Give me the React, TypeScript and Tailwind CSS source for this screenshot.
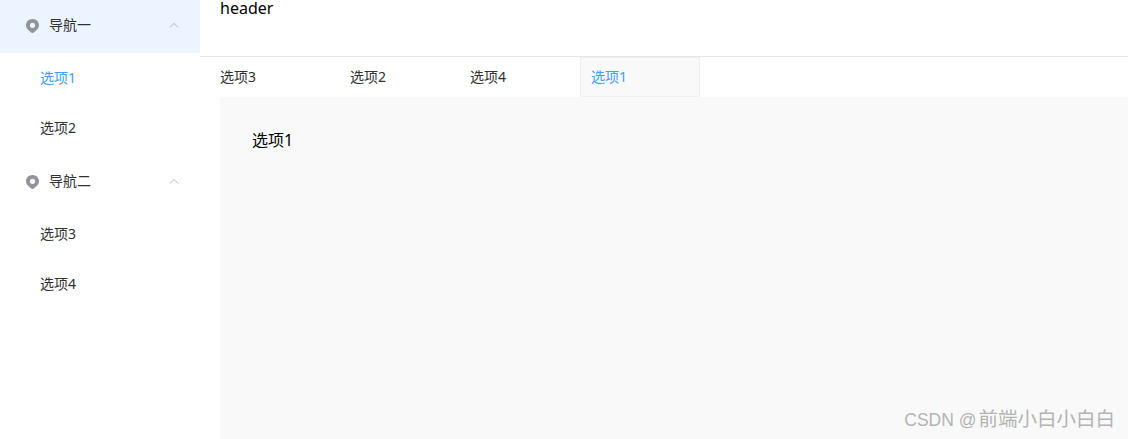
import React from 'react';

const PinIcon: React.FC = () => (
  <svg viewBox="0 0 13 14" className="w-[13px] h-[14px] shrink-0 ml-px mt-[2px]" fill="#909399">
    <path
      fillRule="evenodd"
      d="M6.500 0C2.900 0 0 2.800 0 6.300c0 2.600 1.900 5 5.600 7.400.5.400 1.300.400 1.800 0C11.100 11.300 13 8.900 13 6.300 13 2.800 10.100 0 6.500 0zm0 8.900a2.600 2.600 0 1 1 0-5.200 2.600 2.600 0 0 1 0 5.200z"
    />
  </svg>
);

const Chevron: React.FC = () => (
  <svg viewBox="0 0 12 8" className="w-[10px] h-[7px]" fill="none" stroke="#a3aebc" strokeWidth="1">
    <path d="M1 6.500 L6 1.500 L11 6.500" />
  </svg>
);

const NavGroup: React.FC<{ title: string; active?: boolean }> = ({ title, active }) => (
  <div className={`h-14 flex items-center pl-[25px] pr-[21px] text-sm text-[#303133] ${active ? 'bg-[#ecf5ff]' : ''}`}>
    <PinIcon />
    <span className="ml-[10px] flex-1">{title}</span>
    <Chevron />
  </div>
);

const NavItem: React.FC<{ label: string; active?: boolean }> = ({ label, active }) => (
  <div className={`h-[50px] flex items-center pl-10 text-sm ${active ? 'text-[#409eff]' : 'text-[#303133]'}`}>
    {label}
  </div>
);

export default function App() {
  return (
    <div className="relative flex w-[1128px] h-[439px] overflow-hidden bg-white font-['Noto_Sans','Noto_Sans_CJK_SC',sans-serif]">
      <aside className="w-[200px] shrink-0 -mt-[3px]">
        <NavGroup title="导航一" active />
        <NavItem label="选项1" active />
        <NavItem label="选项2" />
        <NavGroup title="导航二" />
        <NavItem label="选项3" />
        <NavItem label="选项4" />
      </aside>
      <main className="flex-1 flex flex-col min-w-0">
        <header className="h-[57px] shrink-0 border-b border-[#e6e6e6] pl-5 text-base leading-4 text-black">
          header
        </header>
        <div className="h-10 shrink-0 flex text-sm text-[#303133]">
          <div className="w-[130px] pl-5 flex items-center">选项3</div>
          <div className="w-[120px] pl-5 flex items-center">选项2</div>
          <div className="w-[130px] pl-5 flex items-center">选项4</div>
          <div className="w-[120px] pl-[10px] flex items-center bg-[#f9f9f9] border border-[#f0f0f0] text-[#409eff]">选项1</div>
        </div>
        <div className="flex-1 ml-5 bg-[#f9f9f9] pl-8 pt-[33px] text-base leading-5 text-black">
          选项1
        </div>
      </main>
      <span className="absolute right-[13px] bottom-[7px] flex items-baseline gap-[2px] leading-6 text-[#b4b4b4]">
        <span className="font-['Liberation_Sans'] text-[17.500px]">CSDN @</span>
        <span className="text-[19.500px] font-['Noto_Sans_CJK_SC']">前端小白小白白</span>
      </span>
    </div>
  );
}
